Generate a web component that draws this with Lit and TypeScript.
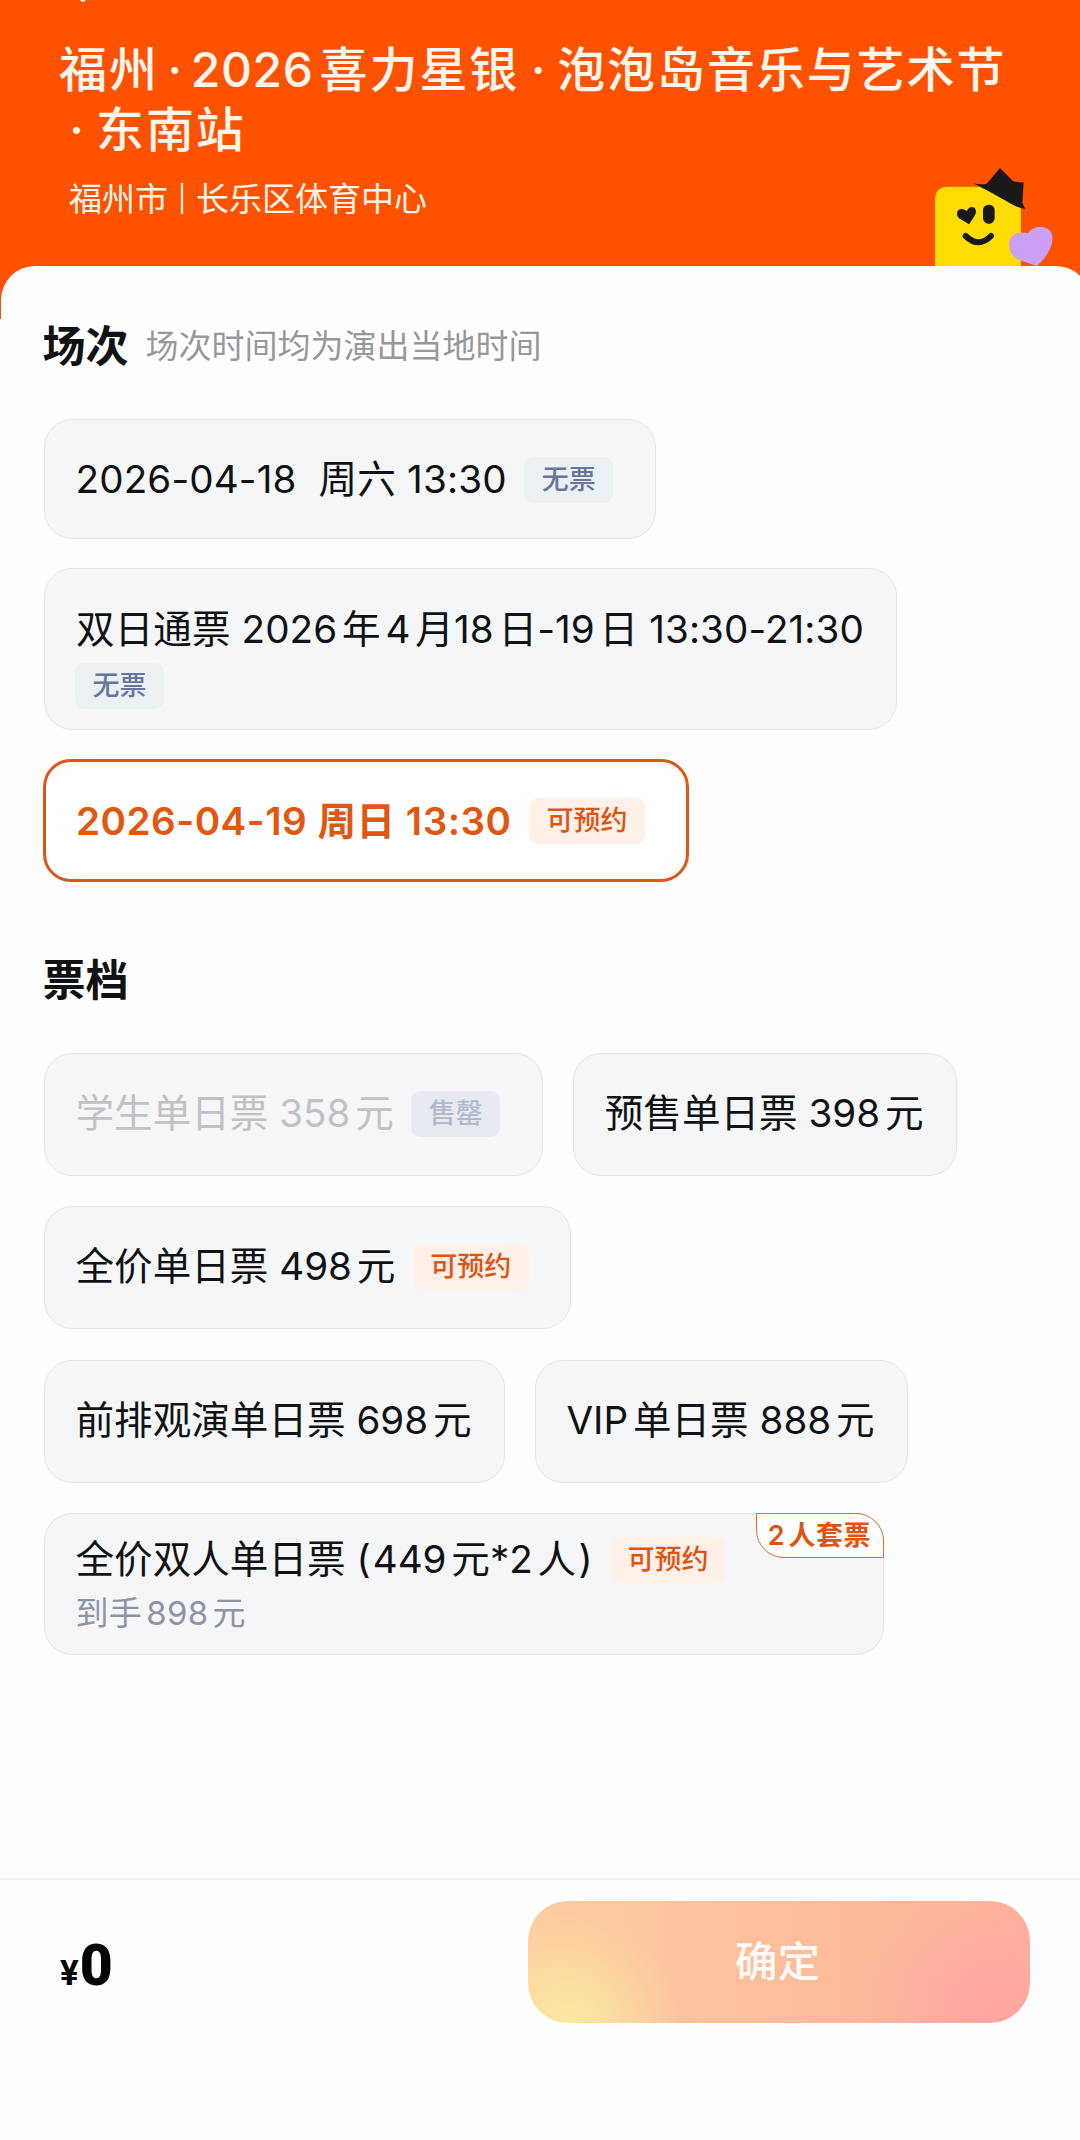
import { LitElement, html, css, svg, nothing } from "lit";
import { customElement, property } from "lit/decorators.js";
import { classMap } from "lit/directives/class-map.js";

type Tone = "muted" | "hot" | "faded";
interface Option {
  label: string;
  tag?: string;
  tone?: Tone;
  selected?: boolean;
  soldOut?: boolean;
  stacked?: boolean;
  note?: string;
  corner?: string;
}

const SESSIONS: Option[] = [
  { label: "2026-04-18  周六 13:30", tag: "无票", tone: "muted" },
  { label: "双日通票 2026年4月18日-19日 13:30-21:30", tag: "无票", tone: "muted", stacked: true },
  { label: "2026-04-19 周日 13:30", tag: "可预约", tone: "hot", selected: true },
];

const TICKETS: Option[] = [
  { label: "学生单日票 358元", tag: "售罄", tone: "faded", soldOut: true },
  { label: "预售单日票 398元" },
  { label: "全价单日票 498元", tag: "可预约", tone: "hot" },
  { label: "前排观演单日票 698元" },
  { label: "VIP单日票 888元" },
  { label: "全价双人单日票 (449元*2人)", tag: "可预约", tone: "hot", note: "到手898元", corner: "2人套票" },
];

const BOUNDARY =
  /(?<=[0-9A-Z])(?=[\u4e00-\u9fff])|(?<=[\u4e00-\u9fff])(?=[0-9A-Z])|(?<=\()|(?=\))/;

// Adds a small gap wherever Latin letters or digits touch Han characters,
// and a smaller one inside parentheses. A leading "1" is narrow and needs none.
const spaced = (text: string) => {
  const parts = text.split(BOUNDARY);
  return parts.map((part, i) => {
    const paren = i > 0 && (part.startsWith(")") || parts[i - 1].endsWith("("));
    const cls = i === 0 || part.startsWith("1") ? "" : paren ? "hair" : "run";
    return html`<span class=${cls}>${part}</span>`;
  });
};

const shared = css`
  * { box-sizing: border-box; }
  .run { margin-left: 0.125em; }
  .hair { margin-left: 0.06em; }
`;

@customElement("option-chip")
class OptionChip extends LitElement {
  @property({ attribute: false }) option!: Option;

  static styles = [
    shared,
    css`
      :host { display: block; }
      .chip {
        position: relative;
        display: flex;
        align-items: center;
        height: 123px;
        padding: 0 32px 3px 30.5px;
        border: 1px solid #e2e5e8;
        border-radius: 28px;
        background: #f4f6f8;
        color: #111214;
        white-space: pre;
      }
      .session {
        height: 120px;
        padding-bottom: 0;
        letter-spacing: 0.15px;
      }
      .tagged { padding-right: 41.5px; }
      .label { font-size: 38.6px; line-height: 54px; }
      .tag {
        height: 46px;
        margin: 1px 0 0 17.5px;
        padding: 0 17.5px;
        border-radius: 9px;
        font-size: 27px;
        line-height: 46px;
        font-weight: 500;
        letter-spacing: 0;
      }
      .muted { background: #ebf0f3; color: #69759a; }
      .faded { background: #e7ebf1; color: #b1bacb; }
      .hot { background: #fff0e9; color: #e0540f; }
      .sold-out { color: #c0c2c5; }
      .stacked {
        flex-direction: column;
        align-items: flex-start;
        height: 162px;
        padding: 33px 32px 0 31px;
        letter-spacing: 0.08px;
      }
      .stacked .tag { margin: 7px 0 0 -1px; }
      .selected {
        height: 123px;
        margin-left: -1px;
        padding-left: 30px;
        border: 3px solid #df5518;
        background: #fff;
        color: #e2570f;
        font-weight: 600;
        letter-spacing: 0.5px;
      }
      .noted {
        flex-wrap: wrap;
        align-content: flex-start;
        width: 840px;
        height: 142px;
        padding-top: 18px;
      }
      .note {
        width: 100%;
        margin-top: 4px;
        font-size: 33px;
        line-height: 46px;
        letter-spacing: 0.3px;
        color: #8e94a4;
      }
      .corner {
        position: absolute;
        top: -1px;
        right: -1px;
        height: 45px;
        padding: 0 12px 0 11px;
        border: 1.5px solid #dd6a33;
        border-radius: 0 28px 0 28px;
        background: #fff;
        color: #e0540f;
        font-size: 27px;
        line-height: 43px;
        font-weight: 600;
        letter-spacing: 0.5px;
      }
    `,
  ];

  render() {
    const o = this.option;
    return html`<div
      class=${classMap({
        chip: true,
        session: /:/.test(o.label),
        tagged: !!o.tag,
        stacked: !!o.stacked,
        selected: !!o.selected,
        "sold-out": !!o.soldOut,
        noted: !!o.note,
      })}
    ><span class="label">${spaced(o.label)}</span>${o.tag
      ? html`<span class="tag ${o.tone}">${o.tag}</span>`
      : nothing}${o.note ? html`<span class="note">${spaced(o.note)}</span>` : nothing}${o.corner
      ? html`<span class="corner">${spaced(o.corner)}</span>`
      : nothing}</div>`;
  }
}

const mascot = svg`
  <path d="M75 348V150Q75 110 115 110H333V348Z" fill="#ffdc04"/>
  <path d="M190 100Q212 105 230 101L270 54L308 92Q322 98 341 97L337 158L346 178Q318 172 290 154Q245 128 190 100Z" fill="#191919"/>
  <path d="M177 223L146 204C136 190 143 176 156 177Q165 178 171 183Q175 171 187 171C199 173 200 186 195 196Z" fill="#191919"/>
  <rect x="219" y="164" width="35" height="57" rx="16" fill="#191919"/>
  <path d="M167 258Q206 296 243 258" fill="none" stroke="#191919" stroke-width="18" stroke-linecap="round"/>
  <path d="M380 348L322 328C288 308 290 255 324 249Q340 246 355 249C370 226 412 225 424 248C434 272 420 302 405 322Q396 335 380 348Z" fill="#cda0f8"/>`;

@customElement("app-root")
class AppRoot extends LitElement {
  static styles = [
    shared,
    css`
      :host {
        display: flex;
        flex-direction: column;
        position: relative;
        width: 1080px;
        height: 2140px;
        overflow: hidden;
        background: #fefefe;
        font-family: Inter, "Noto Sans CJK SC", sans-serif;
        color: #111214;
      }
      .hero {
        position: relative;
        height: 319px;
        flex: none;
        padding: 40px 0 0 59px;
        background: #ff5200;
        color: #fff7ee;
      }
      .speck {
        position: absolute;
        top: -4px;
        left: 80px;
        width: 6px;
        height: 6px;
        border-radius: 3px;
        background: #ffe3cf;
      }
      .title {
        margin: 0;
        font-size: 48px;
        line-height: 60px;
        letter-spacing: 1.9px;
        font-weight: 500;
        white-space: pre;
      }
      .line { display: flex; }
      .dot {
        width: 38px;
        text-align: center;
        letter-spacing: 0;
      }
      .tight { width: 32px; }
      .lead { width: 37px; padding-right: 2px; }
      .year {
        margin-right: 6px;
        letter-spacing: 0.6px;
      }
      .venue {
        display: flex;
        align-items: center;
        margin: 16px 0 0 10px;
        font-size: 33px;
        line-height: 46px;
        font-weight: 400;
        white-space: pre;
      }
      .bar {
        width: 28px;
        text-align: center;
        font-size: 26px;
      }
      .mascot {
        position: absolute;
        left: 910px;
        top: 150px;
        width: 170px;
        height: 116px;
      }
      .sheet {
        position: relative;
        margin: -53px -10px 0 1px;
        padding: 51px 0 0 43px;
        border-radius: 34px 34px 0 0;
        background: #fefefe;
      }
      .heading {
        display: flex;
        align-items: center;
        height: 56px;
        margin-left: -1.5px;
        padding-bottom: 5px;
        font-size: 43px;
        font-weight: 700;
      }
      .hint {
        margin-left: 17px;
        padding-top: 3px;
        font-size: 33px;
        font-weight: 400;
        color: #97989b;
      }
      .sessions {
        display: flex;
        flex-direction: column;
        align-items: flex-start;
        gap: 29px;
        margin: 46px 0 69px;
      }
      .tickets {
        display: flex;
        flex-wrap: wrap;
        gap: 30.4px 30.5px;
        width: 940px;
        margin-top: 46px;
      }
      .footer {
        display: flex;
        justify-content: space-between;
        align-items: flex-start;
        height: 262px;
        margin-top: auto;
        padding: 21px 50px 0 60px;
        border-top: 2px solid #f2f2f3;
        flex: none;
      }
      .price {
        display: flex;
        align-items: baseline;
        padding-top: 30px;
        color: #050505;
        font-family: Roboto, Inter, sans-serif;
        font-weight: 900;
        font-size: 57px;
        line-height: 70px;
      }
      .yen {
        margin-right: 1px;
        font-size: 35px;
        font-weight: 700;
      }
      .confirm {
        width: 502px;
        height: 122px;
        padding: 0 3px 0 0;
        border: 0;
        border-radius: 40px;
        background:
          radial-gradient(ellipse 110px 110px at 40px 122px, #fbeaa0 0, #fbe5a0b0 40%, #fbe5a000),
          radial-gradient(ellipse 150px 120px at 475px 110px, #ffa5a2 0, #ffa8a2a0 45%, #ffa8a200),
          linear-gradient(90deg, #fecda1, #fbbf9c 45%, #ffb198);
        color: #fffaf6;
        font: 500 42.5px/120px Inter, "Noto Sans CJK SC", sans-serif;
      }
    `,
  ];

  render() {
    return html`
      <header class="hero">
        <span class="speck"></span>
        <h1 class="title"><span class="line">福州<span class="dot tight">·</span><span class="year">2026</span>喜力星银<span class="dot">·</span>泡泡岛音乐与艺术节</span><span class="line"><span class="dot lead">·</span>东南站</span></h1>
        <div class="venue">福州市<span class="bar">|</span>长乐区体育中心</div>
        <svg class="mascot" viewBox="0 0 510 348">${mascot}</svg>
      </header>
      <main class="sheet">
        <div class="heading">场次<span class="hint">场次时间均为演出当地时间</span></div>
        <div class="sessions">${SESSIONS.map((o) => html`<option-chip .option=${o}></option-chip>`)}</div>
        <div class="heading">票档</div>
        <div class="tickets">${TICKETS.map((o) => html`<option-chip .option=${o}></option-chip>`)}</div>
      </main>
      <footer class="footer">
        <div class="price"><span class="yen">¥</span>0</div>
        <button class="confirm">确定</button>
      </footer>
    `;
  }
}
